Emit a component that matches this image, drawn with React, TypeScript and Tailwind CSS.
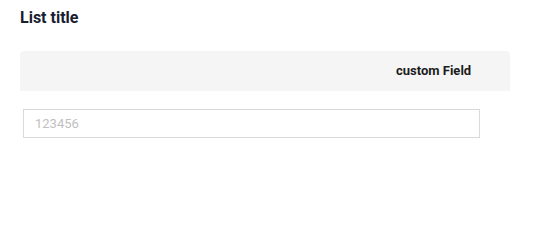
import React from 'react';

export default function App() {
  return (
    <div className="min-h-[243px] w-[548px] bg-white font-['Roboto',sans-serif]">
      <div className="px-5 pt-[7px]">
        <h2 className="text-[16px] font-bold leading-[22px] text-[#17202e]">List title</h2>

        {/* Table header */}
        <div className="mt-[22px] flex h-10 w-[490px] items-center rounded-t bg-[#f5f5f5]">
          <div className="w-[376px]" />
          <div className="text-[13px] font-bold text-[#1c1c1c]">custom Field</div>
        </div>

        {/* Field */}
        <div className="mt-[18px] pl-[3px]">
          <input
            type="text"
            placeholder="123456"
            className="h-[29px] w-[457px] border border-[#d9d9d9] bg-white px-[11px] text-[13px] text-[#333] outline-none placeholder:text-[#bfbfbf]"
          />
        </div>
      </div>
    </div>
  );
}
